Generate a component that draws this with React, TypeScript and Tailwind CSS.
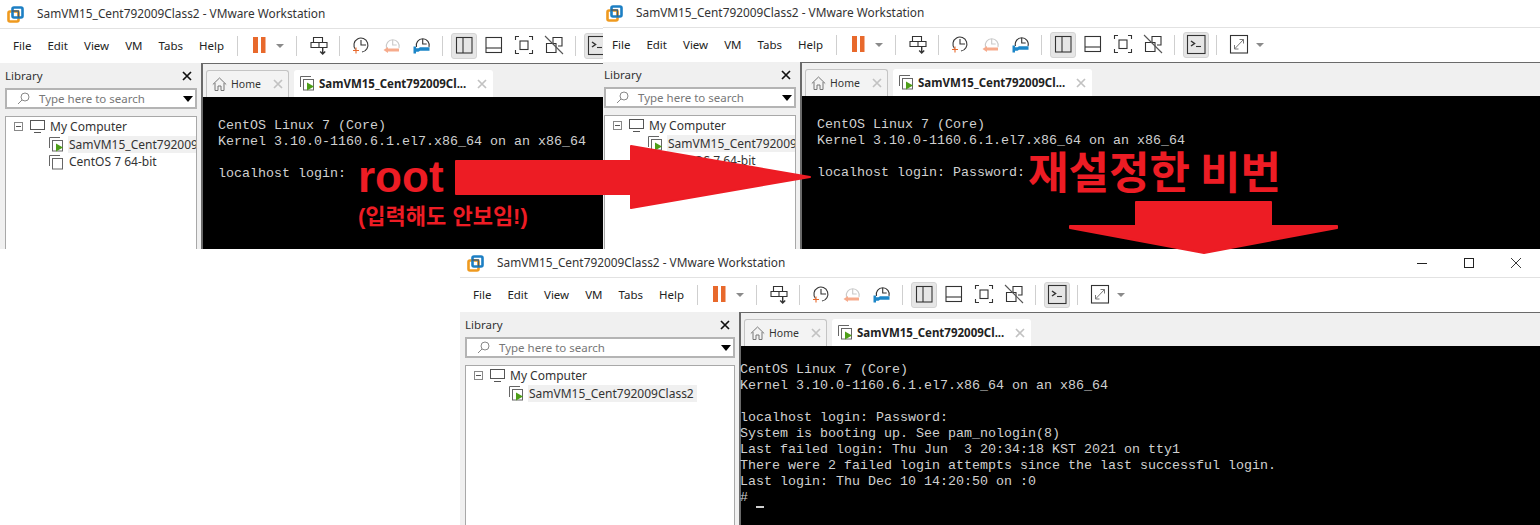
import type { ReactNode } from 'react';

const MENUS = ['File', 'Edit', 'View', 'VM', 'Tabs', 'Help'];

const Logo = () => (
  <svg width="17" height="17" viewBox="0 0 17 17" fill="none">
    <rect x="1.5" y="5.5" width="10" height="10" rx="1.5" stroke="#ef9a1f" strokeWidth="2.6" />
    <rect x="5.5" y="1.5" width="10" height="10" rx="1.5" stroke="#1c7fc4" strokeWidth="2.6" />
    <path d="M5 5h6.5v6.5" stroke="#3f5f78" strokeWidth="1.4" />
  </svg>
);

const Tool = ({ children, active = false, className = '' }: { children: ReactNode; active?: boolean; className?: string }) => (
  <div className={`w-[26px] h-[26px] shrink-0 rounded-[3px] ${active ? 'bg-[#e6e6e6] border border-[#d4d4d4]' : ''} ${className}`}>
    <svg width="26" height="26" viewBox="0 0 26 26" fill="none" stroke="#333" strokeWidth="1.1" className={active ? '-m-px' : ''}>
      {children}
    </svg>
  </div>
);

const Sep = ({ className = '' }: { className?: string }) => <div className={`w-px h-[20px] shrink-0 bg-[#cfcfcf] ${className}`} />;

const Caret = ({ className = '' }: { className?: string }) => (
  <div className={`shrink-0 flex justify-center ${className}`}>
    <div className="w-0 h-0 border-x-[4px] border-x-transparent border-t-[4px] border-t-[#8a8a8a]" />
  </div>
);

const Toolbar = () => (
  <div className="flex items-center h-[34px] bg-white">
    <div className="w-[237px] shrink-0 flex gap-[16px] pl-[13px] text-[11.5px] text-[#222]">
      {MENUS.map((m) => (
        <span key={m}>{m}</span>
      ))}
    </div>
    <Sep />
    <Tool className="ml-[8px]">
      <rect x="7" y="4" width="5" height="16" fill="#e8692c" stroke="none" />
      <rect x="15" y="4" width="4.5" height="16" fill="#e8692c" stroke="none" />
    </Tool>
    <Caret className="w-[16px]" />
    <Sep className="ml-[8px]" />
    <Tool className="ml-[8px]">
      <path d="M8.500 9V4.500h9V9M6 9.500h16v5H6zM14 9.500v5" />
      <path d="M17.700 15v6M15.200 18.500l2.500 2.500 2.500-2.500" strokeWidth="1.400" />
    </Tool>
    <Sep className="ml-[8px]" />
    <Tool className="ml-[7px]">
      <path d="M8.500 16.500A7 7 0 1 1 15 19" />
      <path d="M14 7v5h5" />
      <path d="M6 17.500h6M9 14.500v6" stroke="#e8692c" />
    </Tool>
    <Tool className="ml-[5px]">
      <path d="M8.500 15A6.500 6.500 0 1 1 21 15" stroke="#c9c9c9" />
      <path d="M14.700 7v5h4" stroke="#c9c9c9" />
      <path d="M9 17h12" stroke="#f6ab8c" strokeWidth="3" />
      <path d="M10 14l-4.500 3 4.500 3z" fill="#f6ab8c" stroke="none" />
    </Tool>
    <Tool className="ml-[4px]">
      <path d="M8.500 14A6.500 6.500 0 1 1 21 14" />
      <path d="M14.700 6v5h4" />
      <path d="M5.500 13.500h2.500v1.800h2.500l1.500-1h9.500v3.400H12l-1.500 1H8v1.800H5.500z" fill="#1c86c8" stroke="none" />
    </Tool>
    <Sep className="ml-[8px]" />
    <Tool active className="ml-[8px]">
      <rect x="5.500" y="4.500" width="15.500" height="15.500" />
      <path d="M12 4.500V20" />
    </Tool>
    <Tool className="ml-[2px]">
      <rect x="7" y="4.500" width="15.500" height="15" />
      <path d="M7 15h15.500" />
    </Tool>
    <Tool className="ml-[5px]">
      <path d="M9 3.500H5.500V7M19 3.500h3.500V7M9 20.500H5.500V17M19 20.500h3.500V17" />
      <rect x="10" y="8" width="8" height="8.500" />
    </Tool>
    <Tool className="ml-[4px]">
      <path d="M13 10V4.500h9v8.500h-4M6.500 10.500h9.500v9H6.500z" />
      <path d="M5 3l18 18" stroke="#555" />
    </Tool>
    <Sep className="ml-[9px]" />
    <Tool active className="ml-[8px]">
      <rect x="4.500" y="3.500" width="17.500" height="18" />
      <path d="M8 9l3.500 2.500L8 14" strokeWidth="1.500" />
      <path d="M13 14.500h5" />
    </Tool>
    <Sep className="ml-[7px]" />
    <Tool className="ml-[8px]">
      <rect x="5.500" y="3.500" width="17" height="17.500" />
      <path d="M9.500 17l9-9.500M14.500 7.500h4v4M9.500 13v4h4" stroke="#777" strokeWidth="1" />
    </Tool>
    <Caret className="w-[18px]" />
  </div>
);

const Close = ({ className = '' }: { className?: string }) => (
  <svg width="10" height="10" viewBox="0 0 10 10" stroke="currentColor" strokeWidth="1.700" className={`shrink-0 ${className}`}>
    <path d="M1 1l8 8M9 1l-8 8" />
  </svg>
);

const VmIcon = ({ running = false }: { running?: boolean }) => (
  <svg width="15" height="15" viewBox="0 0 15 15" fill="none" stroke="#666" className="shrink-0">
    <path d="M.5 11V.5H11" />
    <rect x="3.500" y="3.500" width="10" height="10.500" fill="#fff" />
    {running && <path d="M7 6.500l7 4-7 4z" fill="#4d9e18" stroke="none" />}
  </svg>
);

const SidebarTree = ({ vms }: { vms: { name: string; running?: boolean }[] }) => (
  <div className="ml-[5px] mr-[4px] mt-[7px] -mb-[4px] flex-1 bg-white border border-[#a8a8a8] pt-[1px] text-[12px] text-[#333] overflow-hidden">
    <div className="flex items-center h-[17px] pl-[8px]">
      <div className="w-[9px] h-[9px] border border-[#888] flex items-center justify-center shrink-0">
        <div className="w-[5px] h-px bg-[#555]" />
      </div>
      <svg width="15" height="13" viewBox="0 0 15 13" fill="none" stroke="#555" className="ml-[7px] shrink-0">
        <rect x=".5" y=".5" width="14" height="9" />
        <path d="M4 12.500h7" />
      </svg>
      <span className="ml-[5px]">My Computer</span>
    </div>
    {vms.map((vm) => (
      <div key={vm.name} className="flex items-center h-[18px] pl-[43px]">
        <VmIcon running={vm.running} />
        <span className={`ml-[4px] pl-[1px] pr-[3px] whitespace-nowrap ${vm.running ? 'bg-[#f0f0f0] leading-[17px] flex-none min-w-[128px]' : ''}`}>{vm.name}</span>
      </div>
    ))}
  </div>
);

const Tabs = () => (
  <div className="h-[33px] shrink-0 bg-[#f0f0f0] flex items-end pl-[3px] gap-[5px]">
    <div className="w-[83px] h-[27px] bg-[#f3f3f3] border border-b-0 border-[#c4c4c4] rounded-t-[3px] flex items-center pl-[5px] text-[10.5px] text-[#333]">
      <svg width="15" height="14" viewBox="0 0 15 14" fill="none" stroke="#777">
        <path d="M.8 7.500L7.500 1l6.700 6.500M3 6v7.500h3V9h3v4.500h3V6" />
      </svg>
      <span className="ml-[4px] pt-px w-[42px]">Home</span>
      <Close className="text-[#c2c2c2]" />
    </div>
    <div className="w-[199px] h-[27px] bg-white rounded-t-[3px] flex items-center pl-[6px] text-[11.5px] font-bold text-[#222]">
      <VmIcon running />
      <span className="ml-[4px] w-[158px] whitespace-nowrap">SamVM15_Cent792009Cl...</span>
      <Close className="text-[#c2c2c2]" />
    </div>
  </div>
);

interface WindowProps {
  className: string;
  sidebarClass: string;
  consoleClass: string;
  lines: string[];
  vms: { name: string; running?: boolean }[];
  controls?: boolean;
  cursor?: boolean;
}

const VmwareWindow = ({ className, sidebarClass, consoleClass, lines, vms, controls = false, cursor = false }: WindowProps) => (
  <div className={`absolute overflow-hidden flex flex-col bg-white font-['Noto_Sans',sans-serif] ${className}`}>
    <div className="h-[29px] shrink-0 flex items-center pl-[7px] border-b border-[#e2e2e2] text-[11.85px] text-[#333]">
      <Logo />
      <span className="ml-[13px] whitespace-nowrap">SamVM15_Cent792009Class2 - VMware Workstation</span>
      {controls && (
        <div className="ml-auto flex items-center gap-[37px] pr-[19px] text-[#222]">
          <div className="w-[10px] h-px bg-[#222]" />
          <div className="w-[10px] h-[10px] border border-[#222]" />
          <svg width="10" height="10" viewBox="0 0 10 10" stroke="#222" strokeWidth=".9">
            <path d="M0 0l10 10M10 0L0 10" />
          </svg>
        </div>
      )}
    </div>
    <Toolbar />
    <div className="flex-1 flex min-h-0 bg-[#f0f0f0]">
      <div className={`shrink-0 flex flex-col ${sidebarClass}`}>
        <div className="h-[25px] flex items-center justify-between px-[5px] text-[11.5px] text-[#333]">
          <span>Library</span>
          <Close className="mr-[4px] text-[#111]" />
        </div>
        <div className="ml-[5px] mr-[4px] h-[21px] shrink-0 bg-white border-2 border-[#b4b4b4] flex items-center pl-[10px] text-[11.5px] text-[#777]">
          <svg width="13" height="13" viewBox="0 0 13 13" fill="none" stroke="#888" className="shrink-0">
            <circle cx="8" cy="5" r="4" />
            <path d="M5 8l-4 4" />
          </svg>
          <span className="ml-[9px] flex-1 whitespace-nowrap">Type here to search</span>
          <div className="mr-[2px] w-0 h-0 border-x-[5px] border-x-transparent border-t-[6px] border-t-black" />
        </div>
        <SidebarTree vms={vms} />
      </div>
      <div className="flex-1 min-w-0 flex flex-col border-l-2 border-t border-[#6a6a6a]">
        <Tabs />
        <div className={`flex-1 bg-black text-[#d0d0d0] font-['Liberation_Mono',monospace] whitespace-pre leading-[16px] text-[13.33px] ${consoleClass}`}>
          {lines.map((line, i) => (
            <div key={i} className="h-[16px]">{line}</div>
          ))}
          {cursor && (
            <div className="flex items-end h-[18px]">
              <span className="h-[16px] self-start">#</span>
              <span className="ml-[8px] w-[8px] h-[2px] bg-[#d0d0d0]" />
            </div>
          )}
        </div>
      </div>
    </div>
  </div>
);

const HEADER = ['CentOS Linux 7 (Core)', 'Kernel 3.10.0-1160.6.1.el7.x86_64 on an x86_64', ''];

export default function App() {
  return (
    <div className="relative w-[1540px] h-[525px] overflow-hidden bg-white">
      <VmwareWindow
        className="left-[599px] top-[-1px] w-[941px] h-[250px]"
        sidebarClass="w-[201px]"
        consoleClass="pl-[15px] pt-[21px]"
        lines={[...HEADER, 'localhost login: Password:']}
        vms={[{ name: 'SamVM15_Cent792009Class2', running: true }, { name: 'CentOS 7 64-bit' }]}
      />
      <VmwareWindow
        className="left-0 top-0 w-[603px] h-[249px]"
        sidebarClass="w-[201px]"
        consoleClass="pl-[15px] pt-[21px]"
        lines={[...HEADER, 'localhost login:']}
        vms={[{ name: 'SamVM15_Cent792009Class2', running: true }, { name: 'CentOS 7 64-bit' }]}
      />
      <VmwareWindow
        className="left-[460px] top-[249px] w-[1080px] h-[276px]"
        sidebarClass="w-[279px]"
        consoleClass="pt-[16px] [text-indent:-1px]"
        lines={[
          ...HEADER,
          'localhost login: Password:',
          'System is booting up. See pam_nologin(8)',
          'Last failed login: Thu Jun  3 20:34:18 KST 2021 on tty1',
          'There were 2 failed login attempts since the last successful login.',
          'Last login: Thu Dec 10 14:20:50 on :0',
        ]}
        vms={[{ name: 'SamVM15_Cent792009Class2', running: true }]}
        controls
        cursor
      />

      {/* red annotations pasted over the windows */}
      <svg className="absolute left-0 top-0 pointer-events-none" width="1540" height="525" fill="#ed1c24" stroke="#ed1c24" strokeWidth="2" strokeLinejoin="round">
        <path d="M456 161H631V146L810 177 631 208V194H456z" />
        <path d="M1136 202H1271V226H1337L1337 228 1204 253 1070 228V226H1136z" />
      </svg>
      <div className="absolute left-[358px] top-[147px] text-[44px] leading-[60px] font-bold text-[#ed1c24] font-['Liberation_Sans',sans-serif]">root</div>
      <div className="absolute left-[358px] top-[203px] text-[22px] leading-[28px] font-bold text-[#ed1c24] whitespace-nowrap font-['Liberation_Sans','Noto_Sans_CJK_KR',sans-serif]">(입력해도 안보임!)</div>
      <div className="absolute left-[1028px] top-[149px] text-[44px] leading-[42px] font-bold text-[#ed1c24] whitespace-nowrap font-['Noto_Sans_CJK_KR',sans-serif]">재설정한 비번</div>
    </div>
  );
}
